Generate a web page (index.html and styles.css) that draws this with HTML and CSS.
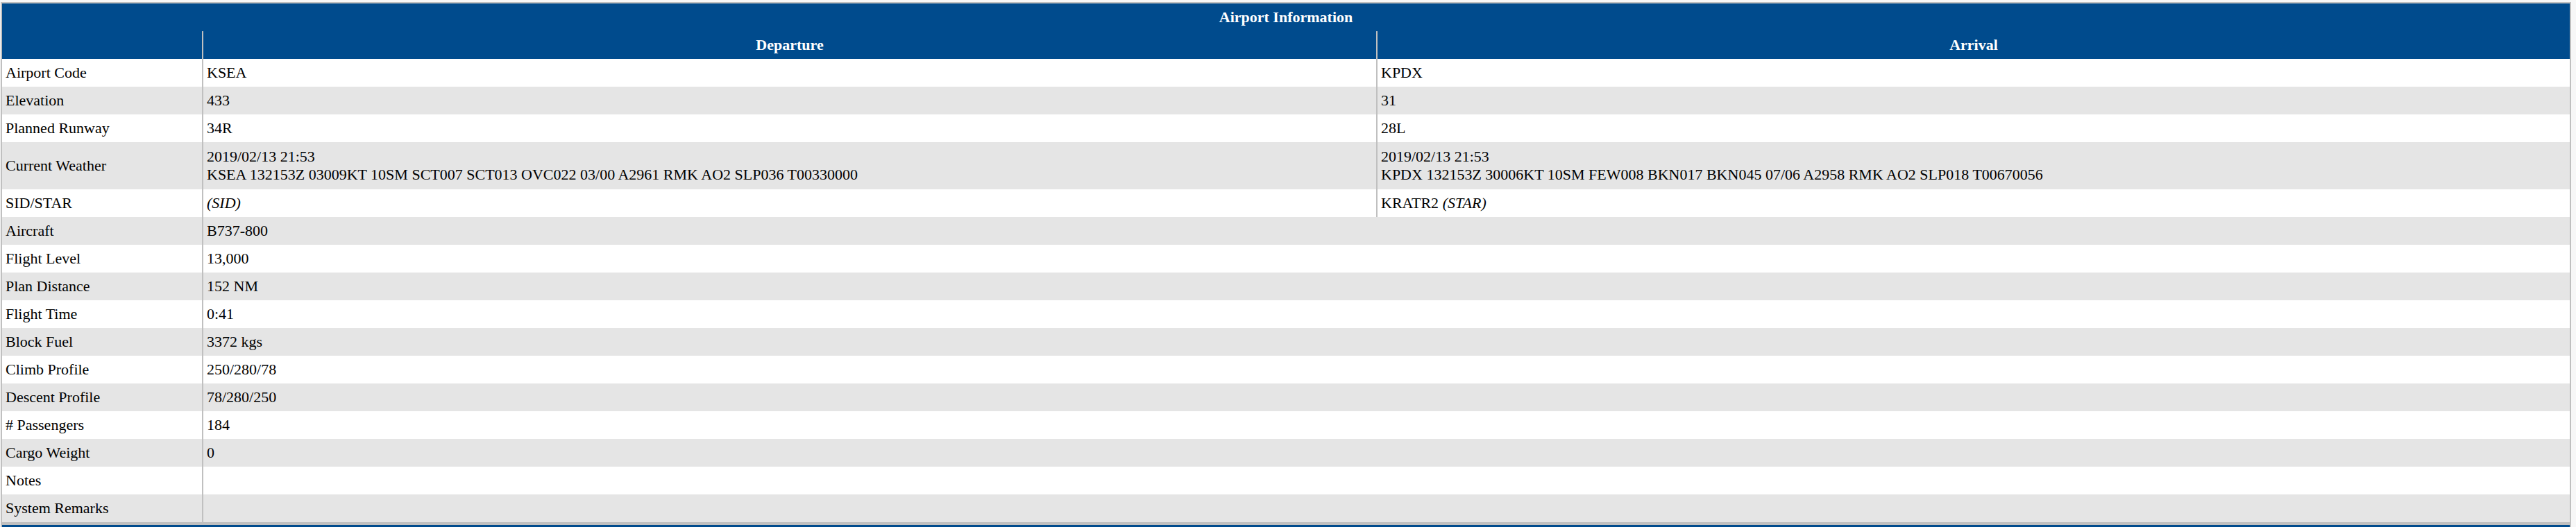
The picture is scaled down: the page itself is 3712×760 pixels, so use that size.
FILE: index.html
```html
<!DOCTYPE html>
<html>
<head>
<meta charset="utf-8">
<title>Airport Information</title>
<link rel="stylesheet" href="styles.css">
</head>
<body>
<table class="info">
  <colgroup>
    <col class="c-label">
    <col class="c-dep">
    <col class="c-arr">
  </colgroup>
  <thead>
    <tr class="title-row"><th colspan="3">Airport Information</th></tr>
    <tr class="sub-row"><th></th><th class="sep">Departure</th><th class="sep">Arrival</th></tr>
  </thead>
  <tbody>
    <tr><td>Airport Code</td><td class="sep">KSEA</td><td class="sep">KPDX</td></tr>
    <tr class="alt"><td>Elevation</td><td class="sep">433</td><td class="sep">31</td></tr>
    <tr><td>Planned Runway</td><td class="sep">34R</td><td class="sep">28L</td></tr>
    <tr class="alt weather"><td>Current Weather</td><td class="sep">2019/02/13 21:53<br>KSEA 132153Z 03009KT 10SM SCT007 SCT013 OVC022 03/00 A2961 RMK AO2 SLP036 T00330000</td><td class="sep">2019/02/13 21:53<br>KPDX 132153Z 30006KT 10SM FEW008 BKN017 BKN045 07/06 A2958 RMK AO2 SLP018 T00670056</td></tr>
    <tr><td>SID/STAR</td><td class="sep"><i>(SID)</i></td><td class="sep">KRATR2 <i>(STAR)</i></td></tr>
    <tr class="alt"><td>Aircraft</td><td class="sep" colspan="2">B737-800</td></tr>
    <tr><td>Flight Level</td><td class="sep" colspan="2">13,000</td></tr>
    <tr class="alt"><td>Plan Distance</td><td class="sep" colspan="2">152 NM</td></tr>
    <tr><td>Flight Time</td><td class="sep" colspan="2">0:41</td></tr>
    <tr class="alt"><td>Block Fuel</td><td class="sep" colspan="2">3372 kgs</td></tr>
    <tr><td>Climb Profile</td><td class="sep" colspan="2">250/280/78</td></tr>
    <tr class="alt"><td>Descent Profile</td><td class="sep" colspan="2">78/280/250</td></tr>
    <tr><td># Passengers</td><td class="sep" colspan="2">184</td></tr>
    <tr class="alt"><td>Cargo Weight</td><td class="sep" colspan="2">0</td></tr>
    <tr><td>Notes</td><td class="sep" colspan="2"></td></tr>
    <tr class="alt"><td>System Remarks</td><td class="sep" colspan="2"></td></tr>
  </tbody>
</table>
<table class="info">
  <thead>
    <tr class="title-row"><th></th></tr>
  </thead>
</table>
</body>
</html>
```
FILE: styles.css
```css
html, body {
  background: #f7f7f7;
}
body {
  margin: 3px 7px 0 1px;
  font-family: "Liberation Serif", "Times New Roman", serif;
  font-size: 22px;
  color: #000;
}
.info {
  width: 3704px;
  table-layout: fixed;
  border-collapse: separate;
  border-spacing: 0;
  border: 2px solid #c0c0c0;
  background: #fff;
}
.c-label { width: 288px; }
.c-dep { width: 1692px; }
.c-arr { width: 1720px; }

.info th {
  background: #004b8d;
  color: #fff;
  font-weight: bold;
  text-align: center;
  height: 40px;
  padding: 0 5px;
  vertical-align: middle;
}
.info td {
  height: 40px;
  padding: 0 5px;
  text-align: left;
  vertical-align: middle;
  background: #fff;
}
.info tr.alt td {
  background: #e5e5e5;
}
.info tr.weather td {
  height: 68px;
}
.info .sep {
  border-left: 2px solid #c0c0c0;
}
```
